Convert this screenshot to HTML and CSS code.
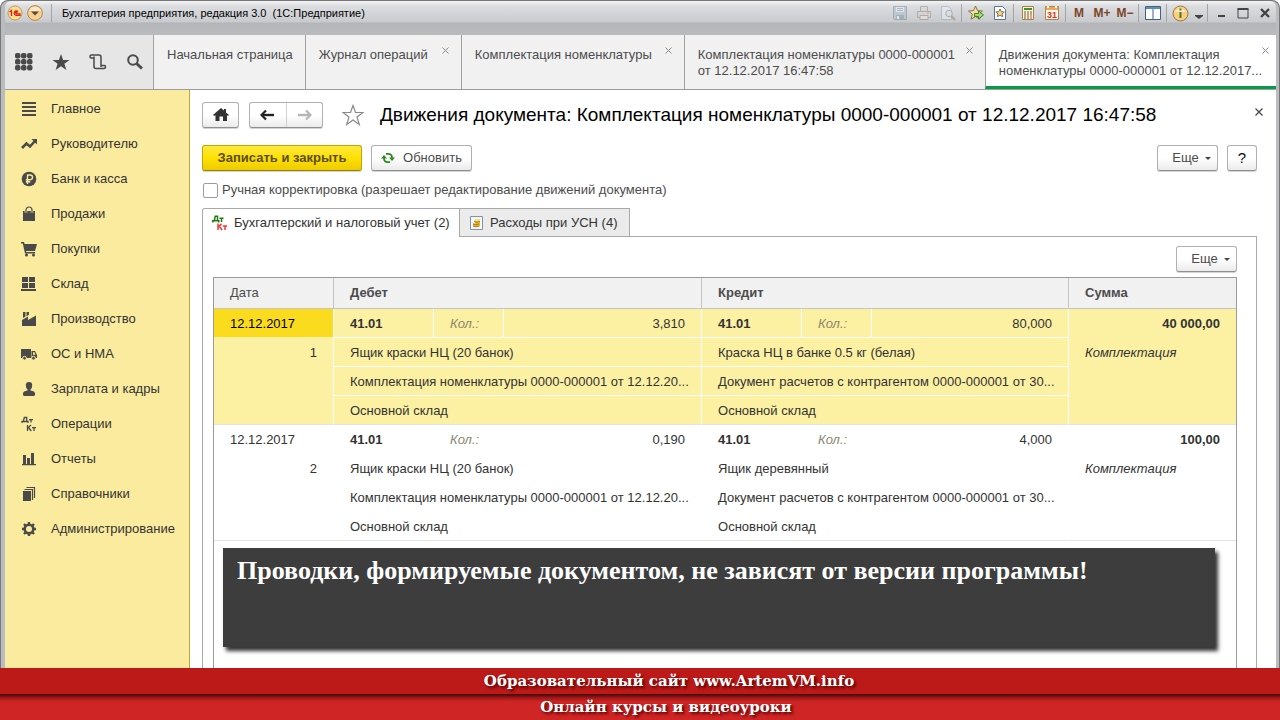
FILE: index.html
```html
<!DOCTYPE html>
<html lang="ru">
<head>
<meta charset="utf-8">
<title>Бухгалтерия предприятия, редакция 3.0 (1С:Предприятие)</title>
<link rel="stylesheet" href="styles.css">
</head>
<body>
<div class="window">
  <header class="titlebar">
    <button class="tool" aria-label="1С">
      <svg width="16" height="16" viewBox="0 0 16 16"><circle cx="8" cy="8" r="7" fill="#fde08a" stroke="#b99a6a"/><path d="M2.600 7 4.500 5.500v5.500M11 6.600a2.200 2.200 0 1 0-1.700 3.700H13.800M10.300 7.800a.8.8 0 1 0-.6 1H13.800" fill="none" stroke="#dd2018" stroke-width="1.300"/></svg>
    </button>
    <button class="tool" aria-label="Главное меню">
      <svg width="18" height="18" viewBox="0 0 18 18"><circle cx="9" cy="9" r="7.400" fill="#f8cf8e" stroke="#b58a55"/><path d="M3 7a6.500 6.500 0 0 1 12 0z" fill="#fdeacb"/><path d="M5 7.500h8L9 11.500z" fill="#5a4a3a"/></svg>
    </button>
    <span class="sep"></span>
    <h1 class="app-title">Бухгалтерия предприятия, редакция 3.0&nbsp; (1С:Предприятие)</h1>
    <div class="tools">
      <button class="tool dim" aria-label="Сохранить"><svg width="16" height="16" viewBox="0 0 16 16"><path d="M1.500 1.500h13v13h-12l-1-1z" fill="#a9bccb" stroke="#6d8496"/><path d="M4 2h8v5H4z" fill="#e8eef2"/><path d="M5 3.500h6M5 5.500h6" stroke="#7e96a8"/><path d="M4 10h8v4H4z" fill="#7b90a0"/><path d="M5 11h2v3H5z" fill="#fff"/></svg></button>
      <button class="tool dim" aria-label="Печать"><svg width="16" height="16" viewBox="0 0 16 16"><path d="M4.500 6V1.500h7V6M1.500 6.500h13v6h-13z" fill="#d8d3d0" stroke="#8c8683"/><path d="M4 10.500h8v4H4z" fill="#f6eadf" stroke="#8c8683"/><path d="M11 8h2" stroke="#b76"/></svg></button>
      <button class="tool dim" aria-label="Просмотр"><svg width="16" height="16" viewBox="0 0 16 16"><path d="M1.500 1.500h7l3 3v10h-10z" fill="#eef2f5" stroke="#8da4b5"/><circle cx="9" cy="8.500" r="3.300" fill="#dce9f1" stroke="#7b868e"/><path d="m11.500 11 3.500 4" stroke="#9a7d62" stroke-width="2"/></svg></button>
      <span class="sep"></span>
      <button class="tool" aria-label="В избранное"><svg width="16" height="16" viewBox="0 0 16 16"><path d="m7.500 1 2 4.600 5 .4-3.800 3.200 1.200 5-4.400-2.700-4.400 2.700 1.200-5L.5 6l5-.4z" fill="#f8dda0" stroke="#8a7146"/><path d="M6.500 8.500h4V6l5 4-5 4v-2.500h-4z" fill="#a5d96b" stroke="#3f8428"/></svg></button>
      <button class="tool" aria-label="Избранное"><svg width="16" height="16" viewBox="0 0 16 16"><path d="M2.500 1.500h8l3 3v10h-11z" fill="#fff" stroke="#54789a"/><path d="m8 4 1.300 2.700 2.900.3L10 8.900l.7 2.900L8 10.300l-2.700 1.500L6 8.900 3.800 7l2.900-.3z" fill="#f3d49b" stroke="#8a7146"/></svg></button>
      <span class="sep"></span>
      <button class="tool" aria-label="Калькулятор"><svg width="16" height="16" viewBox="0 0 16 16"><path d="M2.500 1.500h11v13h-11z" fill="#fff2d2" stroke="#a18452"/><path d="M4 3h8v2H4z" fill="#3f8f36"/><path d="M4 7h2m1 0h2m1 0h2M4 9h2m1 0h2m1 0h2M4 11h2m1 0h2M4 13h2m1 0h2" stroke="#6c5a42"/><path d="M10 11h2m-2 2h2" stroke="#d44"/></svg></button>
      <button class="tool" aria-label="Календарь"><svg width="16" height="16" viewBox="0 0 16 16"><path d="M1.500 1.500h13v13h-13z" fill="#fff7ea" stroke="#b18446"/><path d="M2 2h12v3H2z" fill="#e9a85e"/><path d="M4 1v2M12 1v2" stroke="#fff" stroke-width="2"/><text x="8" y="13" text-anchor="middle" class="cal-text">31</text></svg></button>
      <span class="sep"></span>
      <button class="tool mem">M</button>
      <button class="tool mem">M+</button>
      <button class="tool mem">M−</button>
      <span class="sep"></span>
      <button class="tool" aria-label="Окна"><svg width="16" height="16" viewBox="0 0 16 16"><path d="M.5 1.500h15v13H.5z" fill="#fff" stroke="#3d6486"/><path d="M1 2h14v2H1z" fill="#5c8db5"/><path d="M8 4v10" stroke="#3d6486"/></svg></button>
      <span class="sep"></span>
      <button class="tool" aria-label="О программе"><svg width="17" height="17" viewBox="0 0 17 17"><circle cx="8.500" cy="8.500" r="7.500" fill="#f8cf7e" stroke="#9a7547"/><path d="M3 7a6 6 0 0 1 11 0z" fill="#fdecc4"/><path d="M7.500 3.500h2v2h-2zM7.500 7h2v6h-2z" fill="#4a7a2f"/></svg></button>
      <button class="tool" aria-label="Еще"><svg width="8" height="16" viewBox="0 0 8 16"><path d="M0 10h8v1L4 14 0 11z" fill="#444"/></svg></button>
      <span class="sep"></span>
      <button class="tool win" aria-label="Свернуть"><svg width="12" height="12" viewBox="0 0 12 12"><path d="M3 9h7" stroke="#444" stroke-width="2"/></svg></button>
      <button class="tool win" aria-label="Развернуть"><svg width="12" height="12" viewBox="0 0 12 12"><path d="M1 2h10v9H1z" fill="none" stroke="#444"/><path d="M.5 2h11" stroke="#444" stroke-width="2"/></svg></button>
      <button class="tool win" aria-label="Закрыть"><svg width="12" height="12" viewBox="0 0 12 12"><path d="m2 2 8 8m0-8-8 8" stroke="#444" stroke-width="2.400"/></svg></button>
    </div>
  </header>

  <nav class="tabs">
    <div class="quick">
      <button class="quick-btn" aria-label="Меню функций"><svg width="18" height="18" viewBox="0 0 18 18" fill="#4a4a4a"><rect x="0" y="0" width="5.500" height="5.500" rx="2"/><rect x="6" y="0" width="5.500" height="5.500" rx="2"/><rect x="12" y="0" width="5.500" height="5.500" rx="2"/><rect x="0" y="6" width="5.500" height="5.500" rx="2"/><rect x="6" y="6" width="5.500" height="5.500" rx="2"/><rect x="12" y="6" width="5.500" height="5.500" rx="2"/><rect x="0" y="12" width="5.500" height="5.500" rx="2"/><rect x="6" y="12" width="5.500" height="5.500" rx="2"/><rect x="12" y="12" width="5.500" height="5.500" rx="2"/></svg></button>
      <button class="quick-btn" aria-label="Избранное"><svg width="18" height="18" viewBox="0 0 18 18"><path d="m9 1 2.100 6H17.500l-5.100 3.800 2 6.200L9 13.200 3.600 17l2-6.200L.5 7h6.400z" fill="#4a4a4a"/></svg></button>
      <button class="quick-btn" aria-label="История"><svg width="18" height="18" viewBox="0 0 18 18"><path d="M4.500 5H2.200Q1 5 1 3.500T2.500 2H10q2 0 2 2v8.500h3.500q1 0 1 1.500t-1.500 1.500H7q-2 0-2-2V3.500M12 12.500V14" fill="none" stroke="#4a4a4a" stroke-width="1.500"/></svg></button>
      <button class="quick-btn" aria-label="Поиск"><svg width="18" height="18" viewBox="0 0 18 18"><circle cx="7" cy="7" r="4.800" fill="none" stroke="#4a4a4a" stroke-width="2"/><path d="m10.500 10.500 5.500 5" stroke="#4a4a4a" stroke-width="3"/></svg></button>
    </div>
    <div class="tab tab-home"><a href="#">Начальная страница</a></div>
    <div class="tab tab-journal"><a href="#">Журнал операций</a><button class="tab-close" aria-label="Закрыть"><svg width="7" height="7" viewBox="0 0 7 7"><path d="m.5.500 6 6m0-6-6 6" stroke="#8a8a8a"/></svg></button></div>
    <div class="tab tab-list"><a href="#">Комплектация номенклатуры</a><button class="tab-close" aria-label="Закрыть"><svg width="7" height="7" viewBox="0 0 7 7"><path d="m.5.500 6 6m0-6-6 6" stroke="#8a8a8a"/></svg></button></div>
    <div class="tab tab-doc"><a href="#">Комплектация номенклатуры 0000-000001<br>от 12.12.2017 16:47:58</a><button class="tab-close" aria-label="Закрыть"><svg width="7" height="7" viewBox="0 0 7 7"><path d="m.5.500 6 6m0-6-6 6" stroke="#8a8a8a"/></svg></button></div>
    <div class="tab tab-active"><a href="#">Движения документа: Комплектация<br>номенклатуры 0000-000001 от 12.12.2017...</a><button class="tab-close" aria-label="Закрыть"><svg width="7" height="7" viewBox="0 0 7 7"><path d="m.5.500 6 6m0-6-6 6" stroke="#8a8a8a"/></svg></button></div>
  </nav>

  <div class="workspace">
    <nav class="sidebar">
      <a href="#"><svg viewBox="0 0 16 16"><path d="M1 2h14M1 6h14M1 10h14M1 14h14" stroke="#4a4a4a" stroke-width="1.800"/></svg>Главное</a>
      <a href="#"><svg viewBox="0 0 16 16"><path d="m1 12 4.500-4.500 3.500 3 5-5.500" fill="none" stroke="#4a4a4a" stroke-width="2.600"/><path d="M10.500 3H16v5.500z" fill="#4a4a4a"/></svg>Руководителю</a>
      <a href="#"><svg viewBox="0 0 16 16"><circle cx="8" cy="8" r="7.300" fill="#4a4a4a"/><path d="M6.500 13V4h2.700a2.300 2.300 0 0 1 0 4.700H4.800M4.800 10.800h4.500" fill="none" stroke="#fbeb9e" stroke-width="1.400"/></svg>Банк и касса</a>
      <a href="#"><svg viewBox="0 0 16 16"><path d="M2 5h12v10H2z" fill="#4a4a4a"/><path d="M5 7V4a3 3 0 0 1 6 0v3" fill="none" stroke="#fbeb9e" stroke-width="2.600"/><path d="M5 7V4a3 3 0 0 1 6 0v3" fill="none" stroke="#4a4a4a" stroke-width="1.200"/></svg>Продажи</a>
      <a href="#"><svg viewBox="0 0 16 16"><path d="M0 1h3l.6 2H16l-2 7H5l.3 1H14v1.500H4L1.800 2.500H0z" fill="#4a4a4a"/><circle cx="5.500" cy="14" r="1.500" fill="#4a4a4a"/><circle cx="12.500" cy="14" r="1.500" fill="#4a4a4a"/></svg>Покупки</a>
      <a href="#"><svg viewBox="0 0 16 16"><path d="M1 1h6v5H1zM8 1h6v5H8zM1 7h6v5H1zM8 7h6v5H8zM0 13h15v2H0z" fill="#4a4a4a"/></svg>Склад</a>
      <a href="#"><svg viewBox="0 0 16 16"><path d="M1 15V9l6-3.500V9l8-4.500V15zM2 1h2.500v4.500L2 7zM5.500 1H8v2.800L5.500 5.200z" fill="#4a4a4a"/></svg>Производство</a>
      <a href="#"><svg viewBox="0 0 16 16"><path d="M0 3h10v9H0zM10.500 5H14l2 4v3h-5.500z" fill="#4a4a4a"/><path d="M12 6.200h1.500l1 2.500H12z" fill="#fbeb9e"/><circle cx="3.500" cy="12.200" r="1.900" fill="#4a4a4a" stroke="#fbeb9e"/><circle cx="12.500" cy="12.200" r="1.900" fill="#4a4a4a" stroke="#fbeb9e"/></svg>ОС и НМА</a>
      <a href="#"><svg viewBox="0 0 16 16"><path d="M8 1q3.200 0 3.200 3.300T9.500 8.500v1q4.500.5 4.500 3v1Q14 15 12.500 15h-9Q2 15 2 13.500v-1q0-2.500 4.500-3v-1Q4.800 7.500 4.800 4.300T8 1z" fill="#4a4a4a"/></svg>Зарплата и кадры</a>
      <a href="#"><svg viewBox="0 0 16 16"><g fill="none" stroke="#4a4a4a" stroke-width="1.300"><path d="M1 7V5.500h6V7M2.300 5.500 3.300 1.500h2.400v4M8 3.600h4M10 3.600v3M6.500 9v6M7 12l3-3M7.500 11.500l2.800 3.500M11 11.600h4M13 11.600V15"/></g></svg>Операции</a>
      <a href="#"><svg viewBox="0 0 16 16"><path d="M2 4h3v9H2zM6 7h3v6H6zM10 2h3v11h-3zM1 13h14v1.300H1z" fill="#4a4a4a"/></svg>Отчеты</a>
      <a href="#"><svg viewBox="0 0 16 16"><path d="M2 5h8v10H2z" fill="#4a4a4a"/><path d="M3.500 3.500h8V14M5.500 1.500h8V12" fill="none" stroke="#4a4a4a" stroke-width="1.200"/></svg>Справочники</a>
      <a href="#"><svg viewBox="0 0 16 16"><circle cx="8" cy="8" r="4.300" fill="none" stroke="#4a4a4a" stroke-width="2.600"/><path d="M8 1v2.500M8 12.500V15M1 8h2.500M12.500 8H15M3 3l1.800 1.800M11.200 11.200 13 13M13 3l-1.800 1.800M4.800 11.200 3 13" stroke="#4a4a4a" stroke-width="2.400"/></svg>Администрирование</a>
    </nav>

    <main class="main">
      <div class="headline">
        <button class="btn btn-home" aria-label="Начальная страница"><svg width="16" height="14" viewBox="0 0 16 14"><path d="M8 0l3 2.600V1h2v3.400L16 7l-1 1-1-.7V13h-4V8.500H6.500V13H2.500V7.300L1.200 8 0 7z" fill="#333"/></svg></button>
        <div class="pair">
          <button aria-label="Назад"><svg width="15" height="12" viewBox="0 0 15 12"><path d="M14 6H3" stroke="#222" stroke-width="2.400"/><path d="M6 1.500 1.500 6 6 10.500" fill="none" stroke="#222" stroke-width="2.200"/></svg></button>
          <button aria-label="Вперед" disabled><svg width="15" height="12" viewBox="0 0 15 12"><path d="M1 6h11" stroke="#b5b5b5" stroke-width="2.400"/><path d="M9 1.500 13.500 6 9 10.500" fill="none" stroke="#b5b5b5" stroke-width="2.200"/></svg></button>
        </div>
        <button class="star" aria-label="В избранное"><svg width="22" height="22" viewBox="0 0 22 22"><path d="m11 1.500 2.500 7H21l-6 4.500 2.300 7.500-6.300-4.600-6.300 4.600L7 13 1 8.500h7.500z" fill="#fff" stroke="#8a8a8a" stroke-width="1.200"/></svg></button>
        <h2>Движения документа: Комплектация номенклатуры 0000-000001 от 12.12.2017 16:47:58</h2>
        <button class="page-close" aria-label="Закрыть"><svg width="8" height="8" viewBox="0 0 8 8"><path d="m.5.500 7 7m0-7-7 7" stroke="#444" stroke-width="1.200"/></svg></button>
      </div>

      <div class="commands">
        <button class="btn primary">Записать и закрыть</button>
        <button class="btn refresh"><svg width="14" height="12" viewBox="0 0 14 12"><path d="M5 1.800h2.500A3.500 3.500 0 0 1 11 5.500V6M9 10.200H6.500A3.500 3.500 0 0 1 3 6.500V6" fill="none" stroke="#2c8a1c" stroke-width="1.700"/><path d="M8 5.500h6L11 9zM0 6.500h6L3 3z" fill="#2c8a1c"/></svg>Обновить</button>
        <button class="btn more push">Еще<span class="caret"></span></button>
        <button class="btn help">?</button>
      </div>

      <div class="manual"><input type="checkbox" id="manual"><label for="manual">Ручная корректировка (разрешает редактирование движений документа)</label></div>

      <div class="subtabs">
        <button class="subtab current"><svg width="16" height="16" viewBox="0 0 16 16"><g fill="none" stroke-width="1.500"><path d="M.8 7.500V5.700h6V7.500M2.300 5.500l1-4.300h2.200v4.300M7.500 3.200h4M9.500 3.200V7" stroke="#1d7a12"/><path d="M6 8.500V15M6.500 12l3-3.300M7.500 11.500l2.600 3.500M10.800 11h4.400M13 11v4" stroke="#f23a3a"/></g></svg>Бухгалтерский и налоговый учет (2)</button>
        <button class="subtab other"><svg width="13" height="14" viewBox="0 0 13 14"><path d="M.5.500h12v13H.5z" fill="#f5f8fa" stroke="#7f96a8"/><path d="M5 3.500h5v7H3V8l2-1z" fill="#efb92d"/><path d="M4 5.500q3 1.500 6 0M3 8q3 1.500 6 0M3 10q3 1.500 6 0" fill="none" stroke="#b27a12"/><path d="M5 4q2.500 1 5 0" stroke="#fff2a0" fill="none"/></svg>Расходы при УСН (4)</button>
      </div>

      <section class="panel">
        <div class="panel-bar"><button class="btn more">Еще<span class="caret"></span></button></div>
        <div class="grid">
          <table>
            <colgroup><col class="c-date"><col class="c-acc"><col class="c-lbl"><col class="c-qty"><col class="c-acc"><col class="c-lbl"><col class="c-qty-credit"><col class="c-sum"></colgroup>
            <thead><tr><th class="plain">Дата</th><th colspan="3">Дебет</th><th colspan="3">Кредит</th><th>Сумма</th></tr></thead>
            <tbody class="selected">
              <tr><td class="date">12.12.2017</td><td class="acc">41.01</td><td class="lbl">Кол.:</td><td class="num">3,810</td><td class="acc">41.01</td><td class="lbl">Кол.:</td><td class="num">80,000</td><td class="num sum">40 000,00</td></tr>
              <tr><td rowspan="3" class="num top">1</td><td colspan="3">Ящик краски НЦ (20 банок)</td><td colspan="3">Краска НЦ в банке 0.5 кг (белая)</td><td rowspan="3" class="top note">Комплектация</td></tr>
              <tr><td colspan="3">Комплектация номенклатуры 0000-000001 от 12.12.20...</td><td colspan="3">Документ расчетов с контрагентом 0000-000001 от 30...</td></tr>
              <tr><td colspan="3">Основной склад</td><td colspan="3">Основной склад</td></tr>
            </tbody>
            <tbody>
              <tr><td class="date">12.12.2017</td><td class="acc">41.01</td><td class="lbl">Кол.:</td><td class="num">0,190</td><td class="acc">41.01</td><td class="lbl">Кол.:</td><td class="num">4,000</td><td class="num sum">100,00</td></tr>
              <tr><td rowspan="3" class="num top">2</td><td colspan="3">Ящик краски НЦ (20 банок)</td><td colspan="3">Ящик деревянный</td><td rowspan="3" class="top note">Комплектация</td></tr>
              <tr><td colspan="3">Комплектация номенклатуры 0000-000001 от 12.12.20...</td><td colspan="3">Документ расчетов с контрагентом 0000-000001 от 30...</td></tr>
              <tr><td colspan="3">Основной склад</td><td colspan="3">Основной склад</td></tr>
            </tbody>
          </table>
          <p class="callout">Проводки, формируемые документом, не зависят от версии программы!</p>
        </div>
      </section>
    </main>
  </div>
</div>
<footer class="banner">
  <p class="banner-top">Образовательный сайт www.ArtemVM.info</p>
  <p class="banner-bottom">Онлайн курсы и видеоуроки</p>
</footer>
</body>
</html>
```
FILE: styles.css
```css
* { box-sizing: border-box; }

body {
  margin: 0;
  min-height: 100vh;
  display: flex;
  flex-direction: column;
  font: 13px/16px "Liberation Sans", Arial, sans-serif;
  color: #333;
  background: #fff;
}

button {
  font: inherit;
  color: inherit;
  padding: 0;
  border: 0;
  background: none;
}

a { color: inherit; text-decoration: none; }
svg { display: block; flex: none; }
h1, h2, p { margin: 0; }

.window {
  flex: 1;
  display: flex;
  flex-direction: column;
  padding: 0 3px 0 4px;
  border: solid #77777a;
  border-width: 1px 1px 0;
  border-radius: 8px 8px 0 0;
  background: #bbbcbe;
}

/* Title bar */
.titlebar {
  height: 34px;
  padding: 0 1px 10px 0;
  display: flex;
  align-items: center;
  border-radius: 6px 6px 0 0;
  background: linear-gradient(#f4f4f4 0, #dcdde0 5px, #c9cacd 21px, #b4b5b8 22px, #babbbd 34px);
}

.tool {
  display: flex;
  align-items: center;
  justify-content: center;
  width: 23px;
  height: 20px;
}

.titlebar > .tool { width: 20px; }
.titlebar > .sep { margin: 0 0 0 6px; }

.sep {
  width: 1px;
  height: 18px;
  margin: 0 1px;
  background: #a4a4a6;
}

.app-title {
  flex: 1;
  margin-left: 10px;
  font-size: 11px;
  font-weight: normal;
  color: #000;
  white-space: nowrap;
}

.tools { display: flex; align-items: center; gap: 1px; }
.tools > .tool:nth-last-child(5) { width: 12px; }
.dim { opacity: 0.5; }
.mem { width: 22px; font-size: 12px; font-weight: bold; color: #7d4526; }
.win { width: 21px; }
.cal-text { font: bold 9px "Liberation Sans", sans-serif; fill: #d8342a; }

/* Open windows */
.tabs {
  display: flex;
  height: 55px;
  border-bottom: 1px solid #9d9d9f;
  background: #f1f1f1;
  color: #4c4c4c;
}

.quick {
  flex: 0 0 148px;
  display: flex;
  align-items: center;
  background: #e6e6e6;
}

.quick-btn {
  flex: 1;
  display: flex;
  justify-content: center;
}

.tab {
  display: flex;
  justify-content: space-between;
  align-items: flex-start;
  padding: 12px 12px 0 13px;
  border-left: 1px solid #a0a0a2;
  white-space: nowrap;
}

.tab-home { flex: 0 0 151px; }
.tab-journal { flex: 0 0 156px; }
.tab-list { flex: 0 0 223px; }
.tab-doc { flex: 0 0 301px; }
.tab-active {
  flex: 1;
  padding-right: 7px;
  background: #fff;
  border-bottom: 3px solid #089a4a;
}

.tab-close { width: 7px; }

/* Sections */
.workspace { flex: 1; display: flex; background: #fff; }

.sidebar {
  flex: 0 0 185px;
  padding-top: 1px;
  background: #fbeb9e;
  border-right: 1px solid #c2a636;
}

.sidebar a {
  display: flex;
  align-items: center;
  gap: 14px;
  height: 35px;
  padding-left: 16px;
  white-space: nowrap;
}

.sidebar svg { width: 16px; height: 16px; }

/* Document page */
.main {
  flex: 1;
  min-width: 0;
  display: flex;
  flex-direction: column;
  padding: 12px 19px 0 12px;
}

.headline { display: flex; align-items: center; height: 26px; }

.btn {
  display: flex;
  align-items: center;
  justify-content: center;
  height: 26px;
  border: 1px solid #b0b0b0;
  border-bottom-color: #8f8f8f;
  border-radius: 3px;
  background: linear-gradient(#fff 50%, #ebebeb);
  box-shadow: 0 1px 0 #d4d4d4;
  color: #4c4c4c;
  white-space: nowrap;
}

.btn-home { width: 37px; height: 26px; }

.pair {
  display: flex;
  width: 74px;
  height: 26px;
  margin-left: 10px;
  border: 1px solid #b0b0b0;
  border-bottom-color: #8f8f8f;
  border-radius: 3px;
  background: linear-gradient(#fff 50%, #ebebeb);
  box-shadow: 0 1px 0 #d4d4d4;
}

.pair button { flex: 1; display: flex; align-items: center; justify-content: center; }
.pair button + button { border-left: 1px solid #d0d0d0; }

.star { margin: 0 16px 0 19px; }

h2 {
  flex: 1;
  font-size: 19px;
  line-height: 26px;
  font-weight: normal;
  color: #000;
  white-space: nowrap;
}

.page-close { align-self: flex-start; margin-top: 6px; margin-right: -6px; }

.commands { display: flex; margin-top: 17px; gap: 9px; }
.push { margin-left: auto; }

.primary {
  width: 160px;
  font-weight: bold;
  color: #5c4c14;
  border-color: #c2a500;
  border-bottom-color: #9c8400;
  background: linear-gradient(#ffe93c, #fddf00 55%, #eecb00);
}

.refresh { width: 101px; gap: 8px; }
.more { width: 61px; gap: 6px; padding-left: 8px; }
.help { width: 30px; font-size: 15px; color: #111; }

.caret {
  border: 3px solid transparent;
  border-top-color: #444;
  border-bottom: 0;
}

.manual {
  display: flex;
  align-items: center;
  gap: 4px;
  height: 18px;
  margin-top: 10px;
  color: #4c4c4c;
}

.manual input {
  appearance: none;
  width: 15px;
  height: 15px;
  margin: 0 0 0 1px;
  border: 1px solid #9c9c9c;
  border-radius: 2px;
  background: #fff;
}

.subtabs { display: flex; margin-top: 9px; position: relative; }

.subtab {
  display: flex;
  align-items: center;
  gap: 6px;
  height: 29px;
  padding: 0 9px;
  border: 1px solid #a9a9a9;
  white-space: nowrap;
}

.current {
  width: 258px;
  border-bottom: 0;
  border-radius: 3px 0 0 0;
  background: #fff;
}

.other {
  width: 170px;
  gap: 7px;
  border-left: 0;
  padding-left: 10px;
  background: #ebebeb;
}

.panel {
  flex: 1;
  display: flex;
  flex-direction: column;
  margin-top: -1px;
  padding: 9px 19px 0 10px;
  border: solid #a9a9a9;
  border-width: 1px 1px 0;
}

.panel-bar { display: flex; justify-content: flex-end; }

.grid {
  flex: 1;
  position: relative;
  margin-top: 5px;
  border: solid #9a9a9a;
  border-width: 1px 1px 0;
}

table { width: 100%; table-layout: fixed; border-collapse: separate; border-spacing: 0; }

.c-date { width: 120px; }
.c-acc { width: 100px; }
.c-lbl { width: 70px; }
.c-qty { width: 198px; }
.c-qty-credit { width: 197px; }

th, td {
  height: 29px;
  padding: 0 16px;
  text-align: left;
  white-space: nowrap;
  overflow: hidden;
  border: solid transparent;
  border-width: 0 1px 1px 0;
}

td { padding-top: 2px; }

th {
  height: 31px;
  background: #f1f1f1;
  color: #4c4c4c;
  border-color: #c4c4c4;
}

th:last-child, td.sum, td.note { border-right: 0; }
th.plain { font-weight: normal; }

.selected td { background: #fcf0a3; border-color: #fff; }
.selected td.date { background: #fadb1e; color: #000; }
.selected td.date, .selected td.sum { border-bottom-color: #fcf0a3; }

.acc, .sum { font-weight: bold; }
.lbl { font-style: italic; color: #8c866c; }
.note { font-style: italic; }
td.num { text-align: right; }
td.top { vertical-align: top; padding-top: 7px; }

tbody tr:last-child td, tbody td.top { border-bottom-color: #e2e2e2; }

.callout {
  position: absolute;
  top: 270px;
  left: 9px;
  right: 21px;
  height: 99px;
  padding: 8px 14px;
  background: #3d3d3d;
  box-shadow: 3px 4px 4px #333;
  color: #fff;
  font: bold 26px/30px "Liberation Serif", "Times New Roman", serif;
  white-space: nowrap;
}

/* Site banner */
.banner {
  color: #fff;
  text-align: center;
  font: bold 15px/26px "DejaVu Serif", "Bookman Old Style", serif;
  text-shadow: 2px 2px 3px #500;
}

.banner-top { background: #bc1a18; padding-left: 58px; }

.banner-bottom {
  padding-left: 52px;
  background: linear-gradient(#3c0808, #a51818 4px, #cf2524 8px);
}
```
